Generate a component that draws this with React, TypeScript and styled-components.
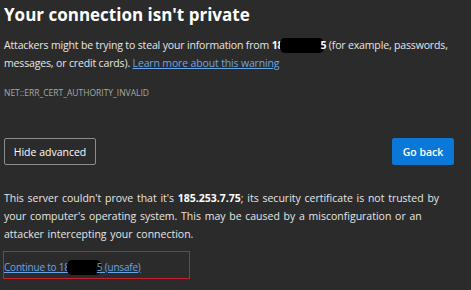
import React from "react";
import styled, { createGlobalStyle } from "styled-components";

const GlobalStyle = createGlobalStyle`
  html, body {
    margin: 0;
    padding: 0;
    background: #2b2b2b;
  }
  body {
    font-family: "Open Sans", "Noto Sans", sans-serif;
    color: #e6e6e6;
  }
`;

const Page = styled.div`
  width: 471px;
  height: 290px;
  box-sizing: border-box;
  padding: 3px 19px 0 4px;
  overflow: hidden;
`;

const Title = styled.h1`
  margin: 0;
  font-size: 17px;
  line-height: 24px;
  font-weight: 700;
  color: #ffffff;
`;

const Text = styled.p<{ $top?: number; $tight?: boolean }>`
  margin: ${(p) => p.$top ?? 0}px 0 0;
  font-size: 10.5px;
  line-height: 18px;
  color: #e6e6e6;
  letter-spacing: ${(p) => (p.$tight ? "-0.15px" : "0")};
  word-spacing: ${(p) => (p.$tight ? "0" : "1px")};
`;

const Link = styled.a`
  color: #6aa6e6;
  text-decoration: underline;
  cursor: pointer;
`;

const Code = styled.div`
  margin-top: 15px;
  font-size: 8.5px;
  color: #a8a8a8;
`;

const Redacted = styled.span<{ $w: number }>`
  display: inline-block;
  width: ${(p) => p.$w}px;
  height: 15px;
  margin: 0 -4px 0 -3px;
  vertical-align: -4px;
  background: #000;
  border-radius: 5px;
`;

const Actions = styled.div`
  display: flex;
  justify-content: space-between;
  align-items: center;
  margin-top: 40px;
  margin-right: -2px;
`;

const Button = styled.button<{ $primary?: boolean }>`
  font-family: inherit;
  font-size: 10.5px;
  height: 27px;
  padding: 0;
  border-radius: 2px;
  cursor: pointer;
  color: #ffffff;
  background: ${(p) => (p.$primary ? "#0b78d8" : "#2b2b2b")};
  border: 1px solid ${(p) => (p.$primary ? "#0b78d8" : "#8c8c8c")};
  font-weight: ${(p) => (p.$primary ? 600 : 400)};
  width: ${(p) => (p.$primary ? "62px" : "92px")};
`;

const Strong = styled.b`
  color: #ffffff;
  font-weight: 700;
`;

const Highlight = styled.div`
  margin: 8px 0 0 -1px;
  width: 187px;
  height: 28px;
  box-sizing: border-box;
  border: 1px solid #c4202f;
  display: flex;
  align-items: center;
  padding: 4px 0 0 0;
  font-size: 10px;
  letter-spacing: -0.2px;
`;

export default function App() {
  return (
    <>
      <GlobalStyle />
      <Page>
        <Title>Your connection isn't private</Title>
        <Text $top={9} $tight>
          Attackers might be trying to steal your information from{" "}
          <Strong>
            18<Redacted $w={44} />5
          </Strong>{" "}
          (for example, passwords, messages, or credit cards).{" "}
          <Link>Learn more about this warning</Link>
        </Text>
        <Code>NET::ERR_CERT_AUTHORITY_INVALID</Code>
        <Actions>
          <Button>Hide advanced</Button>
          <Button $primary>Go back</Button>
        </Actions>
        <Text $top={24}>
          This server couldn't prove that it's <Strong>185.253.7.75</Strong>;
          its security certificate is not trusted by your computer's operating
          system. This may be caused by a misconfiguration or an attacker
          intercepting your connection.
        </Text>
        <Highlight>
          <Link>
            Continue to 18<Redacted $w={34} />5 (unsafe)
          </Link>
        </Highlight>
      </Page>
    </>
  );
}
